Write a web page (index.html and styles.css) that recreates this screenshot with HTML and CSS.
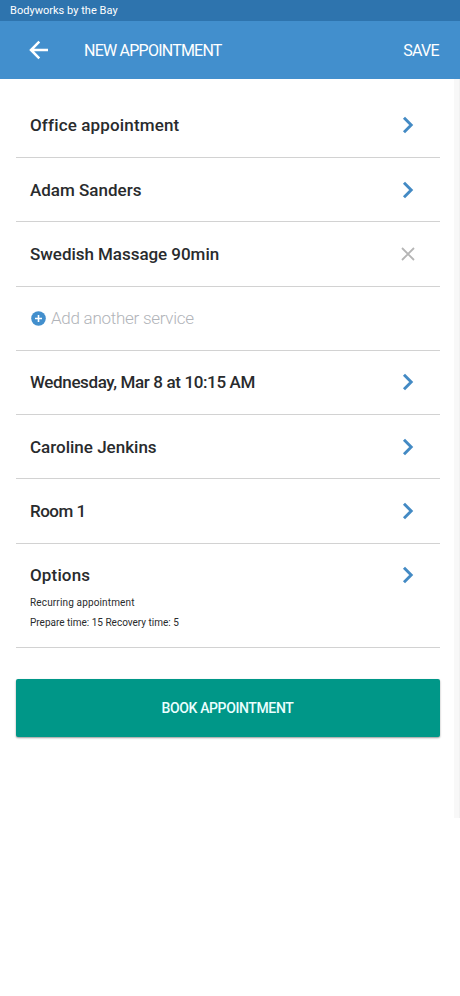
FILE: index.html
```html
<!DOCTYPE html>
<html lang="en">
  <head>
    <meta charset="utf-8" />
    <meta name="viewport" content="width=device-width, initial-scale=1" />
    <title>New Appointment</title>
    <link rel="stylesheet" href="styles.css">
  </head>
  <body>
    <div class="status">Bodyworks by the Bay</div>
    <header class="toolbar">
      <svg class="back" width="20" height="20" viewBox="0 0 20 20"><path d="M19 10H2M10.3 1.7L2 10l8.3 8.3"/></svg>
      <h1>NEW APPOINTMENT</h1>
      <a class="save">SAVE</a>
    </header>
    <main class="content">
      <div class="form">
        <ul class="fields">
          <li class="row">
            <span class="label">Office appointment</span>
            <svg class="chevron" width="12" height="18" viewBox="0 0 12 18"><path d="M2 1.7L9.2 9L2 16.3"/></svg>
          </li>
          <li class="row">
            <span class="label name">Adam Sanders</span>
            <svg class="chevron" width="12" height="18" viewBox="0 0 12 18"><path d="M2 1.7L9.2 9L2 16.3"/></svg>
          </li>
          <li class="row">
            <span class="label service">Swedish Massage 90min</span>
            <svg class="remove" width="14" height="14" viewBox="0 0 14 14"><path d="M1 1l12 12M13 1L1 13"/></svg>
          </li>
          <li class="row add">
            <svg class="plus" width="15" height="15" viewBox="0 0 15 15"><circle cx="7.5" cy="7.5" r="7.3"/><path d="M7.5 4v7M4 7.5h7"/></svg>
            <span class="hint">Add another service</span>
          </li>
          <li class="row">
            <span class="label date">Wednesday, Mar 8 at 10:15 AM</span>
            <svg class="chevron" width="12" height="18" viewBox="0 0 12 18"><path d="M2 1.7L9.2 9L2 16.3"/></svg>
          </li>
          <li class="row">
            <span class="label name">Caroline Jenkins</span>
            <svg class="chevron" width="12" height="18" viewBox="0 0 12 18"><path d="M2 1.7L9.2 9L2 16.3"/></svg>
          </li>
          <li class="row">
            <span class="label room">Room 1</span>
            <svg class="chevron" width="12" height="18" viewBox="0 0 12 18"><path d="M2 1.7L9.2 9L2 16.3"/></svg>
          </li>
          <li class="options">
            <div class="row">
              <span class="label">Options</span>
              <svg class="chevron" width="12" height="18" viewBox="0 0 12 18"><path d="M2 1.7L9.2 9L2 16.3"/></svg>
            </div>
            <p class="recurring">Recurring appointment</p>
            <p>Prepare time: 15 Recovery time: 5</p>
          </li>
        </ul>
        <button class="book" type="button">BOOK APPOINTMENT</button>
      </div>
      <div class="scrollbar"></div>
    </main>
  </body>
</html>
```

FILE: styles.css
```css
* {
  box-sizing: border-box;
}
body {
  margin: 0;
  background: #fff;
  color: #292b2d;
  font-family: Roboto, "Liberation Sans", sans-serif;
}
.status {
  height: 21px;
  padding-left: 10px;
  background: #2e74ae;
  color: #fff;
  font-size: 11px;
  line-height: 22px;
  letter-spacing: .03px;
}
.toolbar {
  display: flex;
  align-items: center;
  height: 58px;
  padding: 0 21px 0 29px;
  background: #428fcd;
  color: #fff;
}
.toolbar h1 {
  flex-grow: 1;
  margin: 0 0 0 35px;
  font-size: 16px;
  font-weight: 400;
  letter-spacing: -.77px;
}
.back {
  fill: none;
  stroke: #fff;
  stroke-width: 2.5;
}
.save {
  font-size: 16px;
  letter-spacing: -.7px;
}
.content {
  display: flex;
  height: 739px;
}
.form {
  flex-grow: 1;
  padding: 14.8px 14.5px 0 15.5px;
}
.fields {
  margin: 0;
  padding: 0;
  list-style: none;
}
.row {
  display: flex;
  align-items: center;
  justify-content: space-between;
  height: 64.25px;
  padding: 0 25.5px 0 14.5px;
  border-bottom: 1px solid #d2d2d2;
}
.label {
  font-size: 17px;
  font-weight: 500;
  letter-spacing: .15px;
}
.name {
  letter-spacing: 0;
}
.service {
  letter-spacing: -.04px;
}
.date {
  letter-spacing: -.37px;
}
.room {
  letter-spacing: -.5px;
}
.chevron {
  fill: none;
  stroke: #438ac4;
  stroke-width: 2.9;
}
.remove {
  margin-right: -1px;
  fill: none;
  stroke: #b5b5b5;
  stroke-width: 1.8;
}
.add {
  justify-content: flex-start;
  gap: 5px;
  padding-left: 15.5px;
}
.plus {
  fill: #428fcd;
  stroke: #fff;
  stroke-width: 1.6;
}
.plus circle {
  stroke: none;
}
.hint {
  color: #b1b4b9;
  font-size: 17px;
  font-weight: 300;
  letter-spacing: -.27px;
}
.options {
  height: 104.25px;
  border-bottom: 1px solid #d2d2d2;
}
.options .row {
  height: 63.25px;
  border: 0;
  margin-bottom: -14px;
}
.options p {
  margin: 0;
  padding-left: 14.5px;
  font-size: 10px;
  line-height: 20px;
}
.options .recurring {
  letter-spacing: .15px;
}
.book {
  display: block;
  width: 100%;
  height: 58px;
  margin-top: 31px;
  border: 0;
  border-radius: 2px;
  background: #009788;
  box-shadow: 0 1px 2px rgba(0,0,0,.4);
  color: #eaffff;
  font-family: inherit;
  font-size: 14px;
  font-weight: 500;
  letter-spacing: -.38px;
}
.scrollbar {
  width: 6px;
  background: #f8f8f8;
  border-right: 1px solid #f1f1f1;
}
```
